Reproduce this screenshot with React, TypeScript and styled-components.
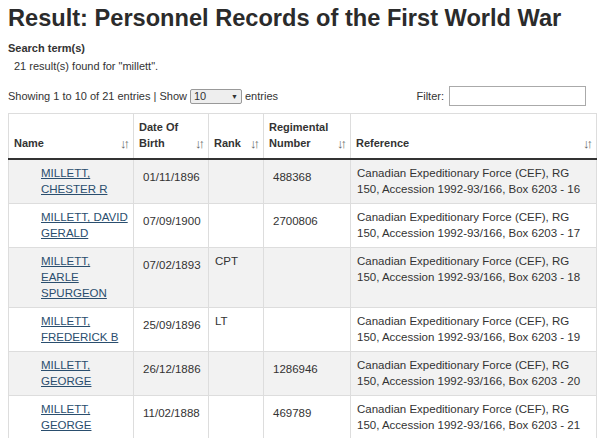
import React from "react";
import styled, { createGlobalStyle } from "styled-components";

const G = createGlobalStyle`
  body { margin: 0; font-family: "Liberation Sans", Arial, sans-serif; color: #333; background: #fff; overflow: hidden; }
  * { box-sizing: border-box; }
`;
const Page = styled.div` padding: 0 0 0 8px; width: 596px; `;
const Title = styled.h1` font-size: 23.6px; font-weight: bold; margin: 5px 0 10px; color: #2b2b2b; white-space: nowrap; `;
const Label = styled.div` font-size: 11px; font-weight: bold; color: #333; `;
const Found = styled.div` font-size: 11px; padding: 6px 0 0 6px; height: 30px; `;
const Bar = styled.div` display: flex; align-items: center; justify-content: space-between; font-size: 11px; height: 22px; margin-top: 1px; `;
const Sel = styled.span` display: inline-flex; align-items: center; justify-content: space-between; width: 52px; height: 15px; border: 1px solid #999; background: #eee; padding: 0 3px; margin: 0 3px; font-size: 11px; border-radius: 2px; `;
const Filter = styled.span` display: flex; align-items: center; gap: 5px; margin-right: 10px; `;
const Input = styled.span` display: inline-block; width: 137px; height: 20px; border: 1px solid #aaa; `;
const Table = styled.table` border-collapse: collapse; width: 588px; margin-top: 6px; font-size: 11.5px; table-layout: fixed; `;
const Th = styled.th<{ w: number }>`
  width: ${p => p.w}px; text-align: left; vertical-align: bottom; font-weight: bold; font-size: 11px;
  border: 1px solid #ddd; border-bottom: 2px solid #333; padding: 5px 5px 7px; line-height: 16px; position: relative;
  & span.s { position: absolute; right: 6px; bottom: 6px; color: #666; font-weight: normal; font-size: 13px; letter-spacing: -3px; }
`;
const Tr = styled.tr<{ odd: boolean }>` background: ${p => (p.odd ? "#f2f2f2" : "#fff")}; `;
const Td = styled.td<{ pl: number; pt?: number }>`
  border: 1px solid #ddd; vertical-align: top; line-height: 16px; padding: ${p => p.pt ?? 5}px 4px 6px ${p => p.pl}px;
`;
const A = styled.a` color: #2a4e6e; text-decoration: underline; `;

const rows = [
  ["MILLETT,\nCHESTER R", "01/11/1896", "", "488368", "16"],
  ["MILLETT, DAVID\nGERALD", "07/09/1900", "", "2700806", "17"],
  ["MILLETT,\nEARLE\nSPURGEON", "07/02/1893", "CPT", "", "18"],
  ["MILLETT,\nFREDERICK B", "25/09/1896", "LT", "", "19"],
  ["MILLETT,\nGEORGE", "26/12/1886", "", "1286946", "20"],
  ["MILLETT,\nGEORGE", "11/02/1888", "", "469789", "21"],
];

export default function App() {
  return (
    <Page>
      <G />
      <Title>Result: Personnel Records of the First World War</Title>
      <Label>Search term(s)</Label>
      <Found>21 result(s) found for "millett".</Found>
      <Bar>
        <span style={{ display: "flex", alignItems: "center" }}>
          Showing 1 to 10 of 21 entries | Show <Sel>10 <small style={{ fontSize: 7 }}>▼</small></Sel> entries
        </span>
        <Filter>Filter: <Input /></Filter>
      </Bar>
      <Table>
        <thead>
          <tr>
            <Th w={125}>Name<span className="s">↓↑</span></Th>
            <Th w={75}>Date Of<br />Birth<span className="s">↓↑</span></Th>
            <Th w={55}>Rank <span className="s">↓↑</span></Th>
            <Th w={87}>Regimental<br />Number<span className="s">↓↑</span></Th>
            <Th w={246}>Reference<span className="s">↓↑</span></Th>
          </tr>
        </thead>
        <tbody>
          {rows.map((r, i) => (
            <Tr key={i} odd={i % 2 === 0}>
              <Td pl={32}>
                <A href="#">{r[0].split("\n").map((l, j) => <React.Fragment key={j}>{j > 0 && <br />}{l}</React.Fragment>)}</A>
              </Td>
              <Td pl={9} pt={9}>{r[1]}</Td>
              <Td pl={6} pt={5}>{r[2]}</Td>
              <Td pl={9} pt={9}>{r[3]}</Td>
              <Td pl={6}>Canadian Expeditionary Force (CEF), RG 150, Accession 1992-93/166, Box 6203 - {r[4]}</Td>
            </Tr>
          ))}
        </tbody>
      </Table>
    </Page>
  );
}
